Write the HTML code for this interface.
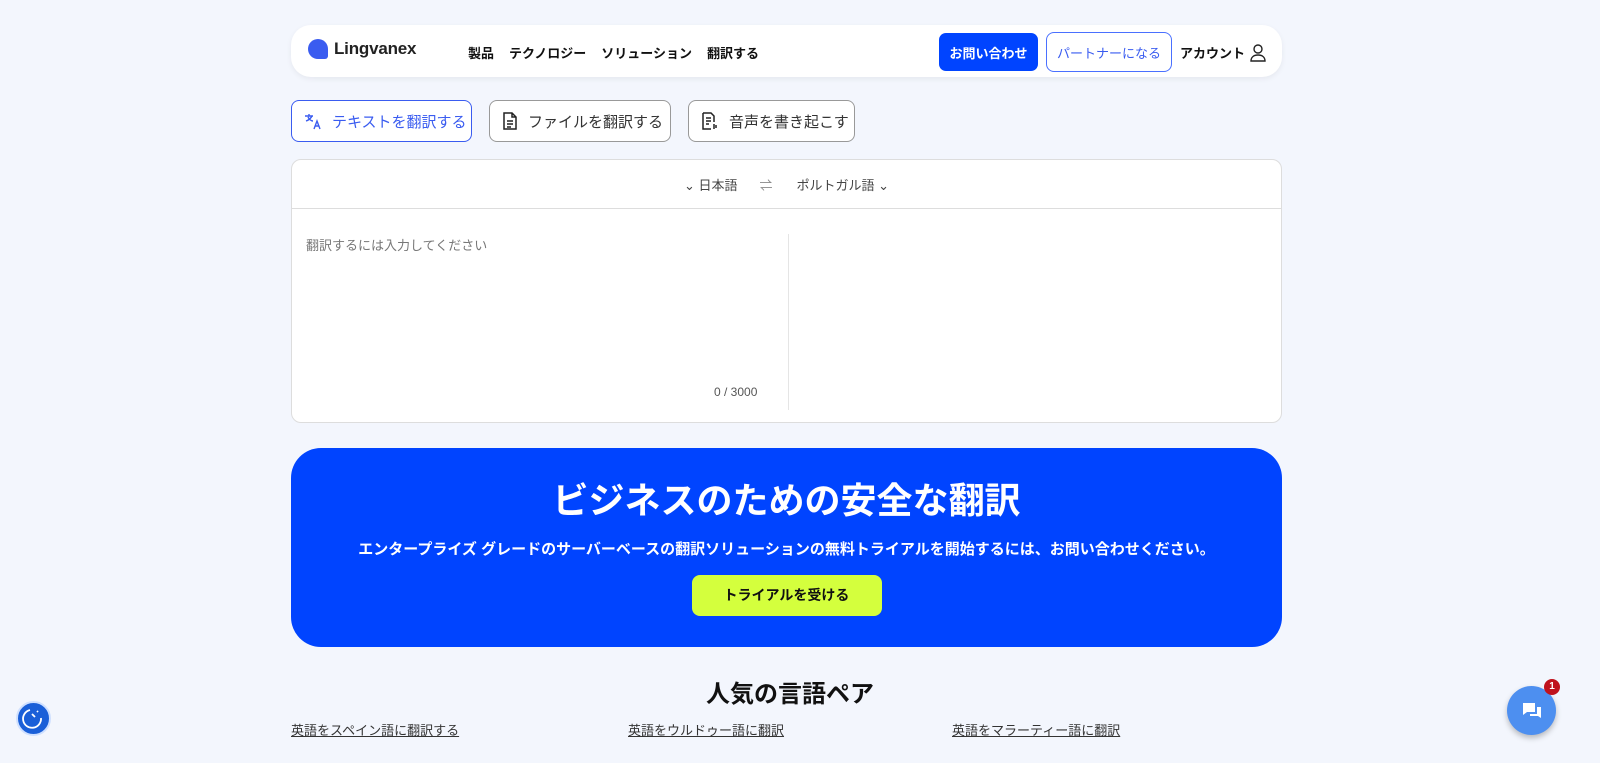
<!DOCTYPE html>
<html><head><meta charset="utf-8"><style>
*{box-sizing:border-box;margin:0;padding:0}
body{width:1600px;height:763px;overflow:hidden;background:#f3f6fd;font-family:"Liberation Sans","Noto Sans CJK JP",sans-serif;color:#111;position:relative}
.nav{position:absolute;left:291px;top:25px;width:991px;height:52px;background:#fff;border-radius:20px;box-shadow:0 2px 6px rgba(0,0,0,.06)}
.logo{position:absolute;left:17px;top:14px;display:flex;align-items:center;font-size:17px;color:#222;font-weight:bold;letter-spacing:-0.2px}
.logo i{display:inline-block;width:20px;height:20px;background:#3a5cf0;border-radius:10px 10px 3px 10px;margin-right:6px}
.menu{position:absolute;left:177px;top:18px;font-size:13px;font-weight:bold}
.menu span{margin-right:15px}
.btn1{position:absolute;left:648px;top:8px;width:99px;height:38px;background:#0044ff;color:#fff;border-radius:7px;font-size:13px;font-weight:bold;display:flex;align-items:center;justify-content:center}
.btn2{position:absolute;left:755px;top:7px;width:126px;height:40px;border:1px solid #4a70ff;color:#3a5cf0;border-radius:8px;font-size:13px;display:flex;align-items:center;justify-content:center}
.acc{position:absolute;left:889px;top:18px;font-size:13px;font-weight:bold;display:flex;align-items:center;gap:5px}
.tab{position:absolute;top:100px;height:42px;border:1px solid #999;border-radius:8px;background:#fff;font-size:15px;color:#333;display:flex;align-items:center;padding-left:12px;gap:10px}
.panel{position:absolute;left:291px;top:159px;width:991px;height:264px;background:#fff;border:1px solid #ddd;border-radius:10px}
.langs{height:49px;border-bottom:1px solid #ddd;font-size:13px;color:#444;display:flex;align-items:center;justify-content:center}
.cta{position:absolute;left:291px;top:448px;width:991px;height:199px;background:#0044ff;border-radius:30px;color:#fff;text-align:center}
.link{position:absolute;top:720px;font-size:13px;color:#333;text-decoration:underline}
</style></head><body>
<div class="nav">
 <div class="logo"><i></i>Lingvanex</div>
 <div class="menu"><span>製品</span><span>テクノロジー</span><span>ソリューション</span><span>翻訳する</span></div>
 <div class="btn1">お問い合わせ</div>
 <div class="btn2">パートナーになる</div>
 <div class="acc">アカウント<svg width="16" height="18" viewBox="0 0 16 18" fill="none" stroke="#222" stroke-width="1.4"><circle cx="8" cy="5" r="4"/><path d="M1 17c0-4 3-6 7-6s7 2 7 6z"/></svg></div>
</div>
<div class="tab" style="left:291px;width:181px;border-color:#3a5cf0;color:#3a5cf0"><svg width="18" height="18" viewBox="0 0 18 18" fill="none" stroke="#3a5cf0" stroke-width="1.4"><path d="M1 4h8M5 2v2M2 9c3-1 5-3 6-5M4 5c1 2 3 4 5 4M10 17l3-8 3 8M11 14h4"/></svg>テキストを翻訳する</div>
<div class="tab" style="left:489px;width:182px"><svg width="16" height="18" viewBox="0 0 16 18" fill="none" stroke="#222" stroke-width="1.5"><path d="M2 1h8l4 4v12H2zM10 1v4h4M5 9h6M5 12h6M5 15h4"/></svg>ファイルを翻訳する</div>
<div class="tab" style="left:688px;width:167px"><svg width="18" height="18" viewBox="0 0 18 18" fill="none" stroke="#222" stroke-width="1.5"><path d="M2 1h8l3 3v6M2 1v16h8M5 6h5M5 9h5M5 12h3M13 12v5M15 13v3"/></svg>音声を書き起こす</div>
<div class="panel">
 <div class="langs"><span>⌄ 日本語</span><span style="margin:0 24px 0 22px;color:#888">⇌</span><span>ポルトガル語 ⌄</span></div>
 <div style="position:absolute;left:14px;top:75px;font-size:13px;color:#777">翻訳するには入力してください</div>
 <div style="position:absolute;left:422px;top:225px;font-size:12px;color:#555">0 / 3000</div>
 <div style="position:absolute;left:496px;top:74px;width:1px;height:176px;background:#e5e5e5"></div>
</div>
<div class="cta">
 <div style="font-size:36px;font-weight:bold;margin-top:31px;line-height:44px">ビジネスのための安全な翻訳</div>
 <div style="font-size:15px;margin-top:15px;font-weight:bold">エンタープライズ グレードのサーバーベースの翻訳ソリューションの無料トライアルを開始するには、お問い合わせください。</div>
 <div style="margin:16px auto 0;width:190px;height:41px;background:#d4ff3d;color:#111;border-radius:8px;font-size:14px;font-weight:bold;line-height:41px">トライアルを受ける</div>
</div>
<div style="position:absolute;left:0;width:1580px;top:674px;text-align:center;font-size:24px;font-weight:bold">人気の言語ペア</div>
<div class="link" style="left:291px">英語をスペイン語に翻訳する</div>
<div class="link" style="left:628px">英語をウルドゥー語に翻訳</div>
<div class="link" style="left:952px">英語をマラーティー語に翻訳</div>
<div style="position:absolute;left:16px;top:701px;width:35px;height:35px;border-radius:50%;background:#1a5fd8;border:2px solid #cfe0ff"><svg width="31" height="31" viewBox="0 0 31 31" fill="none" stroke="#fff" stroke-width="1.8"><path d="M12 7a9 9 0 1 0 11 8M14 11l3 3M19 8l1 1"/></svg></div>
<div style="position:absolute;left:1507px;top:686px;width:49px;height:49px;border-radius:50%;background:#4d8ff0;box-shadow:0 3px 6px rgba(0,0,0,.25)"><svg style="position:absolute;left:14px;top:15px" width="22" height="20" viewBox="0 0 22 20" fill="#fff"><path d="M2 2h12v9H6l-4 3z"/><path d="M16 6h4v11l-3-2H9v-2h7z"/></svg></div>
<div style="position:absolute;left:1544px;top:679px;width:16px;height:16px;border-radius:50%;background:#c0121d;color:#fff;font-size:10px;font-weight:bold;text-align:center;line-height:16px">1</div>
</body></html>
